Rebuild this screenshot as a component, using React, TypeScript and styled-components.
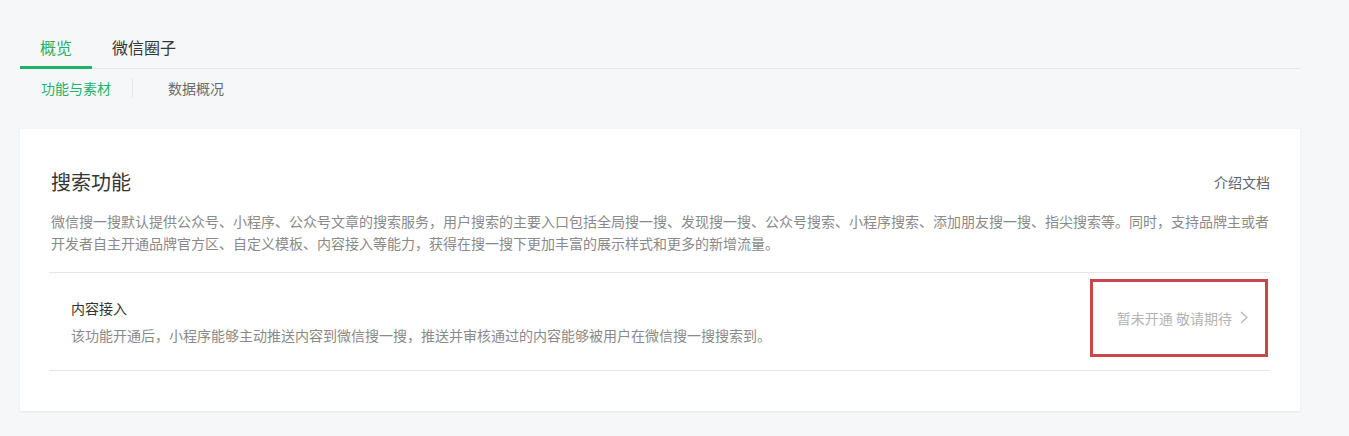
import React, { useState } from 'react';
import styled, { createGlobalStyle } from 'styled-components';

const GlobalStyle = createGlobalStyle`
  html, body {
    margin: 0;
    padding: 0;
    background: #f6f7f9;
    font-family: "Noto Sans CJK SC", "Liberation Sans", sans-serif;
    color: #353535;
  }
`;

const Page = styled.div`
  padding: 28px 49px 40px 20px;
`;

const TabBar = styled.div`
  display: flex;
  border-bottom: 1px solid #e5e7ea;
`;

const Tab = styled.div<{ $active?: boolean }>`
  padding: 0 20px;
  height: 38px;
  line-height: 38px;
  font-size: 16px;
  cursor: pointer;
  color: ${(p) => (p.$active ? '#1fb26b' : '#353535')};
  border-bottom: 3px solid ${(p) => (p.$active ? '#1fb26b' : 'transparent')};
  margin-bottom: -1px;
`;

const SubNav = styled.div`
  display: flex;
  align-items: center;
  height: 38px;
  margin-bottom: 22px;
`;

const SubTab = styled.div<{ $active?: boolean }>`
  font-size: 14px;
  line-height: 20px;
  padding: 0 21px;
  cursor: pointer;
  color: ${(p) => (p.$active ? '#1fb26b' : '#6b6b6b')};
  & + & {
    border-left: 1px solid #e6e6e6;
    padding-left: 35px;
  }
`;

const Card = styled.div`
  background: #fff;
  padding: 39px 30px 40px 31px;
  box-shadow: 0 1px 2px rgba(0, 0, 0, 0.08);
`;

const CardHead = styled.div`
  display: flex;
  justify-content: space-between;
  align-items: center;
  margin-bottom: 14px;
`;

const Title = styled.h2`
  margin: 0;
  font-size: 20px;
  font-weight: 400;
  line-height: 28px;
  color: #353535;
`;

const DocLink = styled.a`
  font-size: 14px;
  color: #5b6478;
  text-decoration: none;
  cursor: pointer;
`;

const Desc = styled.p`
  margin: 0 0 18px;
  font-size: 14px;
  line-height: 22px;
  color: #8a8a8a;
`;

const List = styled.div`
  margin-left: -2px;
  border-top: 1px solid #e7e7eb;
`;

const Row = styled.div`
  display: flex;
  align-items: center;
  justify-content: space-between;
  padding: 0 2px 0 22px;
  min-height: 97px;
  border-bottom: 1px solid #e7e7eb;
`;

const RowInfo = styled.div`
  display: flex;
  flex-direction: column;
  gap: 5px;
`;

const RowTitle = styled.div`
  font-size: 14px;
  line-height: 22px;
  color: #353535;
`;

const RowDesc = styled.div`
  font-size: 14px;
  line-height: 22px;
  color: #8a8a8a;
`;

const Highlight = styled.div`
  box-sizing: border-box;
  width: 178px;
  height: 78px;
  border: 3px solid #c9464b;
  display: flex;
  align-items: center;
  justify-content: flex-end;
  padding-right: 17px;
  margin-bottom: 8px;
`;

const Status = styled.span`
  display: flex;
  align-items: center;
  gap: 8px;
  font-size: 14px;
  color: #b4b4b4;
`;

const Chevron = () => (
  <svg width="8" height="13" viewBox="0 0 8 13" fill="none">
    <path d="M1 1l6 5.5L1 12" stroke="#b4b4b4" strokeWidth="1.2" />
  </svg>
);

export default function App() {
  const [tab, setTab] = useState(0);
  const [sub, setSub] = useState(0);

  return (
    <>
      <GlobalStyle />
      <Page>
        <TabBar>
          {['概览', '微信圈子'].map((t, i) => (
            <Tab key={t} $active={tab === i} onClick={() => setTab(i)}>
              {t}
            </Tab>
          ))}
        </TabBar>
        <SubNav>
          {['功能与素材', '数据概况'].map((t, i) => (
            <SubTab key={t} $active={sub === i} onClick={() => setSub(i)}>
              {t}
            </SubTab>
          ))}
        </SubNav>
        <Card>
          <CardHead>
            <Title>搜索功能</Title>
            <DocLink>介绍文档</DocLink>
          </CardHead>
          <Desc>
            微信搜一搜默认提供公众号、小程序、公众号文章的搜索服务，用户搜索的主要入口包括全局搜一搜、发现搜一搜、公众号搜索、小程序搜索、添加朋友搜一搜、指尖搜索等。同时，支持品牌主或者开发者自主开通品牌官方区、自定义模板、内容接入等能力，获得在搜一搜下更加丰富的展示样式和更多的新增流量。
          </Desc>
          <List>
            <Row>
              <RowInfo>
                <RowTitle>内容接入</RowTitle>
                <RowDesc>
                  该功能开通后，小程序能够主动推送内容到微信搜一搜，推送并审核通过的内容能够被用户在微信搜一搜搜索到。
                </RowDesc>
              </RowInfo>
              <Highlight>
                <Status>
                  暂未开通 敬请期待
                  <Chevron />
                </Status>
              </Highlight>
            </Row>
          </List>
        </Card>
      </Page>
    </>
  );
}
